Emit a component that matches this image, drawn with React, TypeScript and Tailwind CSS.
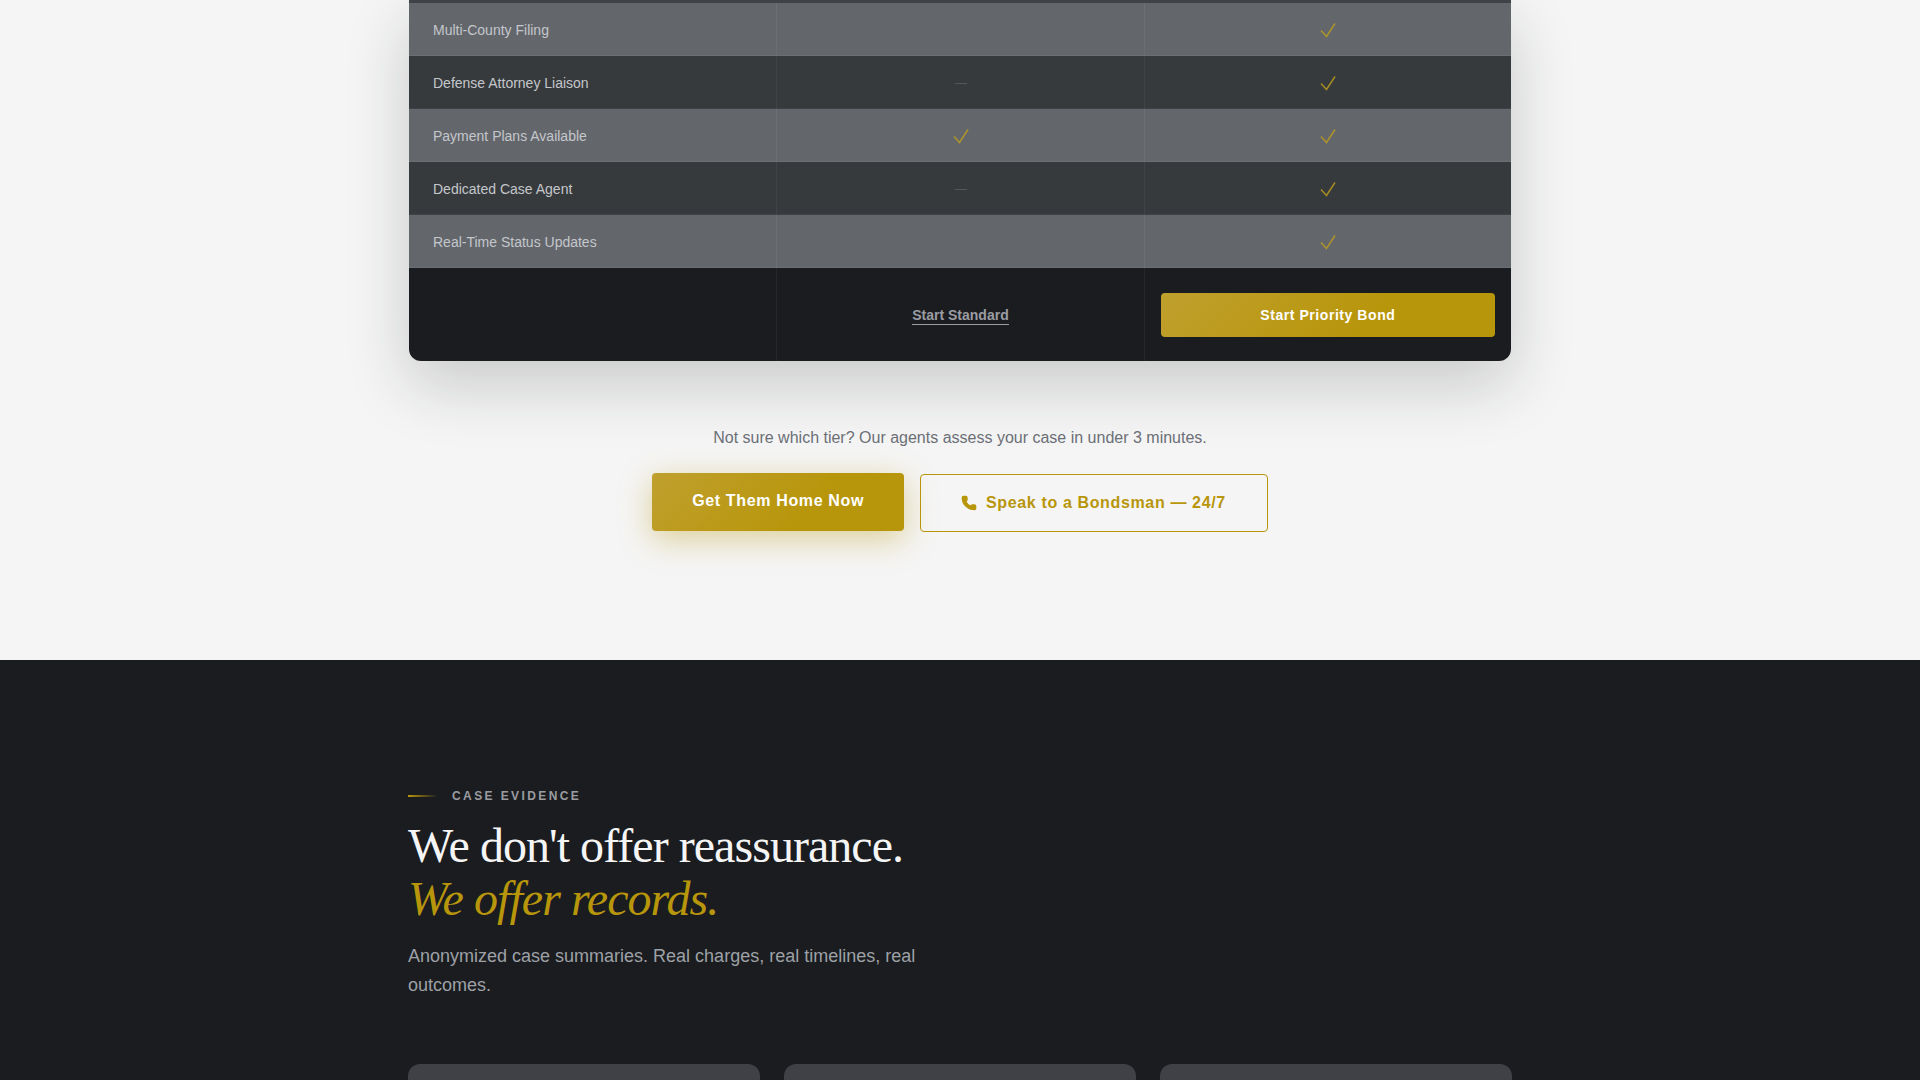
import { Phone } from 'lucide-react';

const rows = [
  { label: 'Multi-County Filing', standard: 'none', light: true },
  { label: 'Defense Attorney Liaison', standard: 'dash', light: false },
  { label: 'Payment Plans Available', standard: 'check', light: true },
  { label: 'Dedicated Case Agent', standard: 'dash', light: false },
  { label: 'Real-Time Status Updates', standard: 'none', light: true },
];

function CheckMark() {
  return (
    <svg viewBox="0 0 16 16" fill="none" className="w-4 h-4 opacity-80">
      <path d="M1 8.5L6.5 14.5L15 1.5" stroke="#c0a01c" strokeWidth="1.5" />
    </svg>
  );
}

export default function App() {
  return (
    <div className="h-screen overflow-hidden bg-[#f5f5f5] font-['Liberation_Sans',Arial,sans-serif]">
      <section className="h-[660px]">
        <div className="w-[1102px] mx-auto rounded-b-xl overflow-hidden shadow-[0_24px_64px_rgba(26,28,32,0.2)] bg-[#1a1c20]">
          <div className="h-[3px] bg-[#3f4246]" />
          {rows.map((row) => (
            <div
              key={row.label}
              className={row.light ? 'grid grid-cols-3 h-[53px] pt-0.5 bg-[#63666b] border-b border-[#6b6e73]' : 'grid grid-cols-3 h-[53px] pt-0.5 bg-[#373a3d] border-b border-[#3f4246]'}
            >
              <div className="flex items-center pl-6 text-sm text-[#c4c7cb]">{row.label}</div>
              <div className="flex items-center justify-center border-l border-white/5 -mt-0.5 pt-0.5 pl-0.5">
                {row.standard === 'check' && <CheckMark />}
                {row.standard === 'dash' && <span className="w-3 h-px bg-white/15" />}
              </div>
              <div className="flex items-center justify-center border-l border-white/5 -mt-0.5 pt-0.5">
                <CheckMark />
              </div>
            </div>
          ))}
          <div className="grid grid-cols-3 h-[93px]">
            <div />
            <div className="flex items-center justify-center border-l border-white/5">
              <a className="mt-0.5 text-sm font-semibold leading-[17px] text-[#9a9ca2] border-b border-[#9a9ca2]">Start Standard</a>
            </div>
            <div className="flex items-center px-4 border-l border-white/5">
              <a className="w-full h-11 flex items-center justify-center rounded text-sm font-bold tracking-[0.04em] text-white bg-[linear-gradient(135deg,#c0a02e_0%,#b8960c_60%)]">
                Start Priority Bond
              </a>
            </div>
          </div>
        </div>

        <p className="mt-[65px] text-center text-base leading-6 text-[#6b6f76]">
          Not sure which tier? Our agents assess your case in under 3 minutes.
        </p>
        <div className="mt-6 flex justify-center items-start gap-4">
          <a className="h-[58px] -translate-y-px pt-4 px-10 rounded text-base font-bold tracking-[0.04em] text-white bg-[linear-gradient(135deg,#c0a02e_0%,#b8960c_60%)] shadow-[0_8px_32px_rgba(184,150,12,0.4)]">
            Get Them Home Now
          </a>
          <a className="h-[58px] pl-10 pr-[41px] flex items-center gap-[9px] rounded border border-[#b8960c] text-base font-bold tracking-[0.04em] text-[#b8960c]">
            <Phone className="w-4 h-4" fill="#b8960c" strokeWidth={2} />
            Speak to a Bondsman — 24/7
          </a>
        </div>
      </section>

      <section className="h-[420px] bg-[#1a1c20] pt-[128px]">
        <div className="w-[1104px] mx-auto">
          <div className="flex items-center gap-[14px]">
            <span className="w-[30px] h-0.5 bg-gradient-to-r from-[#b8960c] to-transparent" />
            <span className="text-xs font-bold tracking-[0.2em] text-[#9a9ca0]">CASE EVIDENCE</span>
          </div>
          <h2 className="mt-[15px] font-['Liberation_Serif','Times_New_Roman',serif] text-5xl leading-[53px] font-normal tracking-[-0.02em] text-[#f5f5f5]">
            We don't offer reassurance.
            <br />
            <em className="text-[#b8960c]">We offer records.</em>
          </h2>
          <p className="mt-[17px] w-[520px] text-lg leading-[29px] text-[#9ea1a6]">
            Anonymized case summaries. Real charges, real timelines, real outcomes.
          </p>
          <div className="mt-[64px] grid grid-cols-3 gap-6">
            <div className="h-[200px] rounded-xl bg-[#3f4147]" />
            <div className="h-[200px] rounded-xl bg-[#3f4147]" />
            <div className="h-[200px] rounded-xl bg-[#3f4147]" />
          </div>
        </div>
      </section>
    </div>
  );
}
